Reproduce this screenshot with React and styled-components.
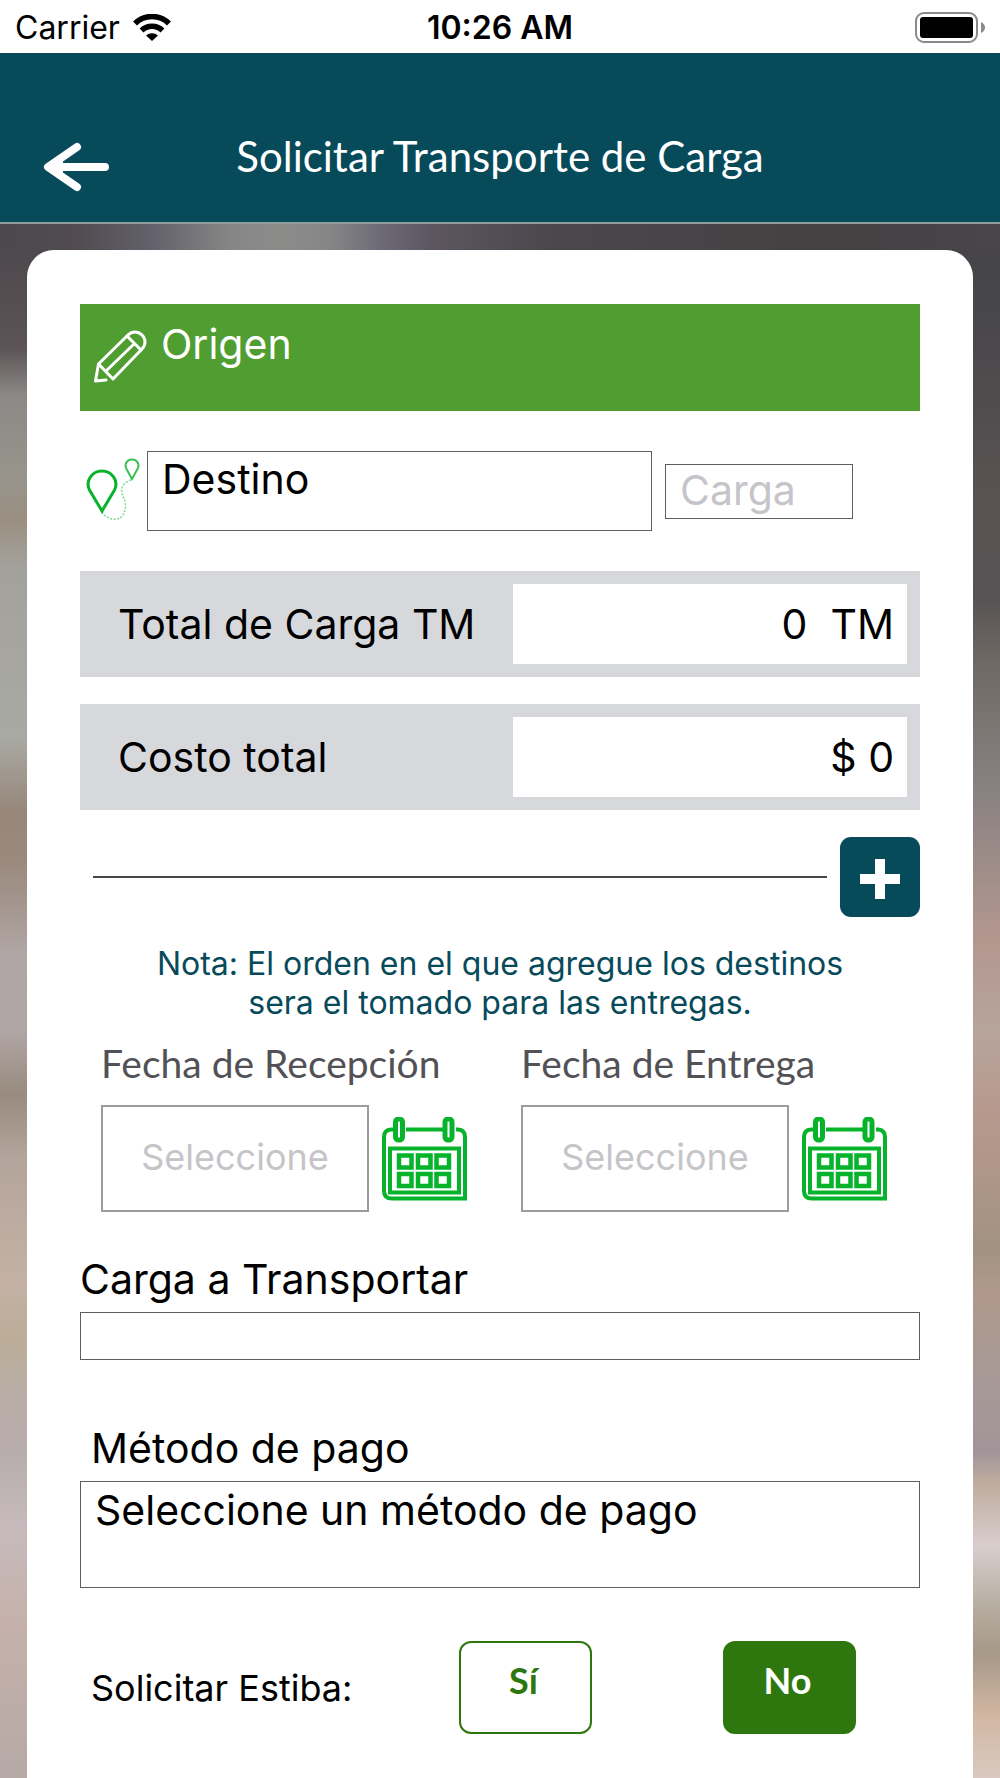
import React, { useState } from "react";
import styled, { createGlobalStyle, ThemeProvider } from "styled-components";

const theme = {
  colors: {
    azul: "#074a5a",
    verde: "#509d32",
    verdeOscuro: "#2e770f",
    verdeIcono: "#06b32b",
    gris: "#d7d8dc",
    grisBorde: "#5f5f61",
    grisFecha: "#9c9c9e",
    grisTexto: "#525156",
    placeholder: "#c5c5c9",
    negro: "#000",
    blanco: "#fff",
  },
  fonts: {
    base: '"Inter", "Liberation Sans", sans-serif',
    titulo: '"Lato", "Open Sans", sans-serif',
  },
};

const GlobalStyle = createGlobalStyle`
  * {
    box-sizing: border-box;
  }

  body {
    margin: 0;
    font-family: ${theme.fonts.base};
    color: ${theme.colors.negro};
  }

  button, input, select, textarea {
    font: inherit;
    color: inherit;
    border-radius: 0;
    margin: 0;
  }

  button {
    cursor: pointer;
  }
`;

const Pantalla = styled.div`
  min-height: 100vh;
  display: flex;
  flex-direction: column;
`;

const BarraEstado = styled.div`
  display: grid;
  grid-template-columns: 1fr auto 1fr;
  align-items: center;
  height: 53px;
  padding: 1px 15px 0;
  font-size: 32px;
`;

const Operador = styled.div`
  display: flex;
  align-items: center;
  gap: 13px;
`;

const Hora = styled.div`
  font-weight: 600;
`;

const Bateria = styled.div`
  justify-self: end;
  display: flex;
`;

const Cabecera = styled.header`
  display: grid;
  grid-template-columns: 80px 1fr 80px;
  align-items: start;
  padding: 64px 36px 5px;
  background-color: ${({ theme }) => theme.colors.azul};
  border-bottom: 2px solid #8f9ca0;
`;

const BotonVolver = styled.button`
  display: flex;
  align-items: center;
  justify-content: center;
  height: 100px;
  padding: 0;
  border: 0;
  background: none;
`;

const Titulo = styled.h1`
  margin: 0;
  font-family: ${({ theme }) => theme.fonts.titulo};
  font-size: 42px;
  font-weight: 400;
  line-height: 78px;
  text-align: center;
  color: ${({ theme }) => theme.colors.blanco};
`;

const Fondo = styled.main`
  flex: 1;
  display: flex;
  padding: 26px 27px 0;
  background:
    linear-gradient(
      to right,
      #4c484b 0%, #524c52 8%, #62606a 15%, #868686 23%, #8b8c8a 28%,
      #868686 33%, #6d6b77 38%, #5d5661 43%, #4b474c 55%, #434142 83%, #49454b 100%
    ) top / 100% 26px no-repeat,
    linear-gradient(
      #4a464b 0%, #5c5456 8%, #8b8886 11%, #97948c 16%, #9a8f81 19%,
      #a3a19b 22%, #a9a9a3 33%, #978679 38%, #9a897c 41%, #b0a6a5 47%,
      #afa5a4 52%, #998b7f 56%, #b3a49b 60%, #c4b1a4 68%, #bbad98 72%,
      #b9aea6 75%, #b8adad 79%, #c6babc 84%, #c5b1aa 90%, #b6a9a6 100%
    ) left / 50% 100% no-repeat,
    linear-gradient(
      #454348 0%, #47464a 5%, #5a5353 18%, #575354 24%, #6e6864 28%,
      #8b8382 37%, #b3978f 46%, #b7a49b 52%, #b7998e 57%, #a39281 66%,
      #b0998c 69%, #a99a95 73%, #a19599 79%, #bfac9e 81%, #d8cecd 85%,
      #b5ada0 89%, #a79887 92%, #d2b7a3 96%, #dac9c0 100%
    ) right / 50% 100% no-repeat;
`;

const Tarjeta = styled.form`
  flex: 1;
  min-width: 0;
  display: flex;
  flex-direction: column;
  padding: 54px 53px 44px;
  border-radius: 27px 27px 0 0;
  background-color: ${({ theme }) => theme.colors.blanco};
  font-size: 41px;
  line-height: 50px;
`;

const BotonOrigen = styled.button`
  display: flex;
  align-items: flex-start;
  gap: 14px;
  height: 107px;
  padding: 15px 13px;
  border: 0;
  background-color: ${({ theme }) => theme.colors.verde};
  color: ${({ theme }) => theme.colors.blanco};
  text-align: left;

  svg {
    margin-top: 10px;
  }
`;

const FilaDestino = styled.div`
  display: flex;
  align-items: center;
  gap: 13px;
  margin-top: 40px;
  padding-right: 67px;
`;

const GrupoDestino = styled.div`
  flex: 1;
  min-width: 0;
  display: flex;
  align-items: center;
  gap: 7px;
  padding-left: 6px;

  svg {
    flex-shrink: 0;
  }
`;

const CampoDestino = styled.textarea`
  flex: 1;
  min-width: 0;
  height: 80px;
  padding: 2px 14px;
  border: 1px solid ${({ theme }) => theme.colors.grisBorde};
  resize: none;
  overflow: hidden;
`;

const CampoCarga = styled.input`
  flex-shrink: 0;
  width: 188px;
  height: 55px;
  padding: 0 14px 3px;
  border: 1px solid ${({ theme }) => theme.colors.grisBorde};

  &::placeholder {
    color: ${({ theme }) => theme.colors.placeholder};
    opacity: 1;
  }
`;

const Totales = styled.div`
  display: flex;
  flex-direction: column;
  gap: 27px;
  margin: 40px 0 27px;
`;

const FilaTotal = styled.div`
  display: flex;
  align-items: center;
  justify-content: space-between;
  padding: 13px 13px 13px 38px;
  background-color: ${({ theme }) => theme.colors.gris};
`;

const ValorTotal = styled.output`
  width: 50%;
  padding: 15px 13px;
  background-color: ${({ theme }) => theme.colors.blanco};
  text-align: right;
  white-space: pre;
`;

const FilaAgregar = styled.div`
  display: flex;
  align-items: center;
  gap: 13px;
  padding-left: 13px;
`;

const Linea = styled.hr`
  flex: 1;
  margin: 0;
  border: 0;
  border-top: 2px solid #48484c;
`;

const BotonAgregar = styled.button`
  display: flex;
  align-items: center;
  justify-content: center;
  width: 80px;
  height: 80px;
  padding: 4px 0 0;
  border: 0;
  border-radius: 11px;
  background-color: ${({ theme }) => theme.colors.azul};
`;

const Nota = styled.p`
  max-width: 720px;
  margin: 27px auto 0;
  font-size: 32px;
  line-height: 39px;
  text-align: center;
  color: ${({ theme }) => theme.colors.azul};
`;

const Fechas = styled.div`
  display: grid;
  grid-template-columns: repeat(2, minmax(0, 1fr));
  margin-top: 16px;
`;

const CampoFecha = styled.div`
  padding: 0 33px 0 21px;
`;

const EtiquetaFecha = styled.label`
  display: block;
  font-family: ${({ theme }) => theme.fonts.titulo};
  font-size: 39px;
  color: ${({ theme }) => theme.colors.grisTexto};
`;

const SelectorFecha = styled.div`
  display: flex;
  align-items: center;
  gap: 13px;
  margin-top: 17px;
`;

const EntradaFecha = styled.input`
  flex: 1;
  min-width: 0;
  height: 107px;
  padding: 0 0 4px;
  border: 2px solid ${({ theme }) => theme.colors.grisFecha};
  font-size: 36px;
  text-align: center;

  &::placeholder {
    color: ${({ theme }) => theme.colors.placeholder};
    opacity: 1;
  }
`;

const BotonCalendario = styled.button`
  display: flex;
  padding: 0;
  border: 0;
  background: none;
`;

const Etiqueta = styled.label`
  margin-top: ${({ $arriba }) => $arriba}px;
  padding-left: ${({ $sangria }) => $sangria || 0}px;
`;

const CampoTransporte = styled.input`
  height: 48px;
  margin-top: 8px;
  padding: 0 14px;
  border: 1px solid ${({ theme }) => theme.colors.grisBorde};
`;

const SelectPago = styled.select`
  appearance: none;
  height: 107px;
  margin-top: 8px;
  padding: 2px 14px 52px;
  border: 1px solid ${({ theme }) => theme.colors.grisBorde};
  background-color: ${({ theme }) => theme.colors.blanco};
`;

const FilaEstiba = styled.div`
  display: grid;
  grid-template-columns: minmax(0, 1fr) 133px 133px;
  column-gap: 131px;
  align-items: center;
  margin-top: 53px;
  padding: 0 64px 0 11px;
  font-size: 36px;
  white-space: nowrap;
`;

const BotonEstiba = styled.button`
  height: 93px;
  padding: 0 4px 16px 0;
  border: 2px solid ${({ theme }) => theme.colors.verdeOscuro};
  border-radius: 12px;
  background-color: ${({ theme, $activo }) =>
    $activo ? theme.colors.verdeOscuro : theme.colors.blanco};
  color: ${({ theme, $activo }) =>
    $activo ? theme.colors.blanco : theme.colors.verdeOscuro};
  font-family: ${({ theme }) => theme.fonts.titulo};
  font-weight: 700;
`;

function IconoWifi() {
  return (
    <svg width="38" height="27" viewBox="0 0 38 27" aria-hidden="true">
      <g fill="none" stroke="#000" strokeWidth="5.5">
        <path d="M2 9.5 A24 24 0 0 1 36 9.5" />
        <path d="M8.5 16.5 A15 15 0 0 1 29.5 16.5" />
      </g>
      <path d="M13 21.5 A9 9 0 0 1 25 21.5 L19 27 Z" />
    </svg>
  );
}

function IconoBateria() {
  return (
    <svg width="70" height="31" viewBox="0 0 70 31" aria-hidden="true">
      <rect x="1" y="1" width="61" height="29" rx="8" fill="none" stroke="#8a8a8a" strokeWidth="2" />
      <rect x="5" y="5" width="53" height="21" rx="3" />
      <path d="M66 10 Q70 12 70 15.5 Q70 19 66 21 Z" fill="#8a8a8a" />
    </svg>
  );
}

function IconoFlecha() {
  return (
    <svg width="66" height="50" viewBox="0 0 66 50" aria-hidden="true">
      <path
        d="M34 5 L5 25 L34 45 M8 25 H62"
        fill="none"
        stroke="#fff"
        strokeWidth="8"
        strokeLinecap="round"
        strokeLinejoin="round"
      />
      <path d="M3 25 L20 13 V37 Z" fill="#fff" />
    </svg>
  );
}

function IconoLapiz() {
  return (
    <svg width="54" height="54" viewBox="0 0 54 54" aria-hidden="true">
      <g fill="none" stroke="#fff" strokeWidth="3" strokeLinecap="round" strokeLinejoin="round">
        <path d="M13 51 L2.5 52 L5.5 35 L35 6 C39 2 45 2 49 6 C53 10 53 16 49 20 L20 50 L5.5 35" />
        <path d="M34 7 L48 21 M13 42 L41 15" />
      </g>
    </svg>
  );
}

function IconoRuta() {
  return (
    <svg width="54" height="66" viewBox="0 0 54 66" aria-hidden="true">
      <g fill="none" stroke="#06b32b" strokeLinejoin="miter">
        <path d="M16 53 L3.5 32 C-1 23 6 13 16 13 C26 13 33 23 28.5 32 Z" strokeWidth="3" />
        <path d="M46 21 L40.5 11 C38 6 41 1.5 46 1.5 C51 1.5 54 6 51.5 11 Z" strokeWidth="2" opacity="0.8" />
        <path
          d="M16 54 C21 62 33 64 37 57 C44 43 34 39 36 30 C37 25 43 23 46 21"
          strokeWidth="1.5"
          strokeDasharray="2 1.5"
          opacity="0.5"
        />
      </g>
    </svg>
  );
}

function IconoCalendario() {
  return (
    <svg width="85" height="84" viewBox="0 0 85 84" aria-hidden="true">
      <g fill="none" stroke="#06b32b" strokeWidth="4">
        <path d="M11 12.5 H9 Q2 13 2 20 V74 Q2 81.5 10 81.5 H83 V20 Q83 13 76 12.5 H74 M24 12.5 H61" />
        <rect x="13.5" y="2" width="7" height="21" rx="3" strokeWidth="5" />
        <rect x="63" y="2" width="7" height="21" rx="3" strokeWidth="5" />
        <rect x="8" y="31.5" width="69" height="44" />
        {[17, 36, 54.5].map((x) => (
          <React.Fragment key={x}>
            <rect x={x} y="38.5" width="12.5" height="12" strokeWidth="4.5" />
            <rect x={x} y="57" width="12.5" height="12" strokeWidth="4.5" />
          </React.Fragment>
        ))}
      </g>
    </svg>
  );
}

function Fecha({ id, titulo }) {
  return (
    <CampoFecha>
      <EtiquetaFecha htmlFor={id}>{titulo}</EtiquetaFecha>
      <SelectorFecha>
        <EntradaFecha id={id} type="text" placeholder="Seleccione" />
        <BotonCalendario type="button" aria-label={titulo}>
          <IconoCalendario />
        </BotonCalendario>
      </SelectorFecha>
    </CampoFecha>
  );
}

export default function App() {
  const [estiba, setEstiba] = useState(false);

  return (
    <ThemeProvider theme={theme}>
      <GlobalStyle />
      <Pantalla>
        <BarraEstado>
          <Operador>
            Carrier
            <IconoWifi />
          </Operador>
          <Hora>10:26 AM</Hora>
          <Bateria>
            <IconoBateria />
          </Bateria>
        </BarraEstado>

        <Cabecera>
          <BotonVolver type="button" aria-label="Volver">
            <IconoFlecha />
          </BotonVolver>
          <Titulo>Solicitar Transporte de Carga</Titulo>
        </Cabecera>

        <Fondo>
          <Tarjeta onSubmit={(e) => e.preventDefault()}>
            <BotonOrigen type="button">
              <IconoLapiz />
              <span>Origen</span>
            </BotonOrigen>

            <FilaDestino>
              <GrupoDestino>
                <IconoRuta />
                <CampoDestino aria-label="Destino" defaultValue="Destino" />
              </GrupoDestino>
              <CampoCarga type="text" aria-label="Carga" placeholder="Carga" />
            </FilaDestino>

            <Totales>
              <FilaTotal>
                <label htmlFor="totalCarga">Total de Carga TM</label>
                <ValorTotal id="totalCarga">{"0  TM"}</ValorTotal>
              </FilaTotal>
              <FilaTotal>
                <label htmlFor="costoTotal">Costo total</label>
                <ValorTotal id="costoTotal">$ 0</ValorTotal>
              </FilaTotal>
            </Totales>

            <FilaAgregar>
              <Linea />
              <BotonAgregar type="button" aria-label="Agregar destino">
                <svg width="40" height="40" viewBox="0 0 40 40" aria-hidden="true">
                  <path d="M20 0 V40 M0 20 H40" stroke="#fff" strokeWidth="10" />
                </svg>
              </BotonAgregar>
            </FilaAgregar>

            <Nota>
              Nota: El orden en el que agregue los destinos sera el tomado para las entregas.
            </Nota>

            <Fechas>
              <Fecha id="fechaRecepcion" titulo="Fecha de Recepción" />
              <Fecha id="fechaEntrega" titulo="Fecha de Entrega" />
            </Fechas>

            <Etiqueta htmlFor="cargaTransportar" $arriba={42}>
              Carga a Transportar
            </Etiqueta>
            <CampoTransporte id="cargaTransportar" type="text" />

            <Etiqueta htmlFor="metodoPago" $arriba={63} $sangria={11}>
              Método de pago
            </Etiqueta>
            <SelectPago id="metodoPago">
              <option>Seleccione un método de pago</option>
            </SelectPago>

            <FilaEstiba role="group" aria-labelledby="estiba">
              <span id="estiba">Solicitar Estiba:</span>
              <BotonEstiba
                type="button"
                $activo={estiba}
                aria-pressed={estiba}
                onClick={() => setEstiba(true)}
              >
                Sí
              </BotonEstiba>
              <BotonEstiba
                type="button"
                $activo={!estiba}
                aria-pressed={!estiba}
                onClick={() => setEstiba(false)}
              >
                No
              </BotonEstiba>
            </FilaEstiba>
          </Tarjeta>
        </Fondo>
      </Pantalla>
    </ThemeProvider>
  );
}
